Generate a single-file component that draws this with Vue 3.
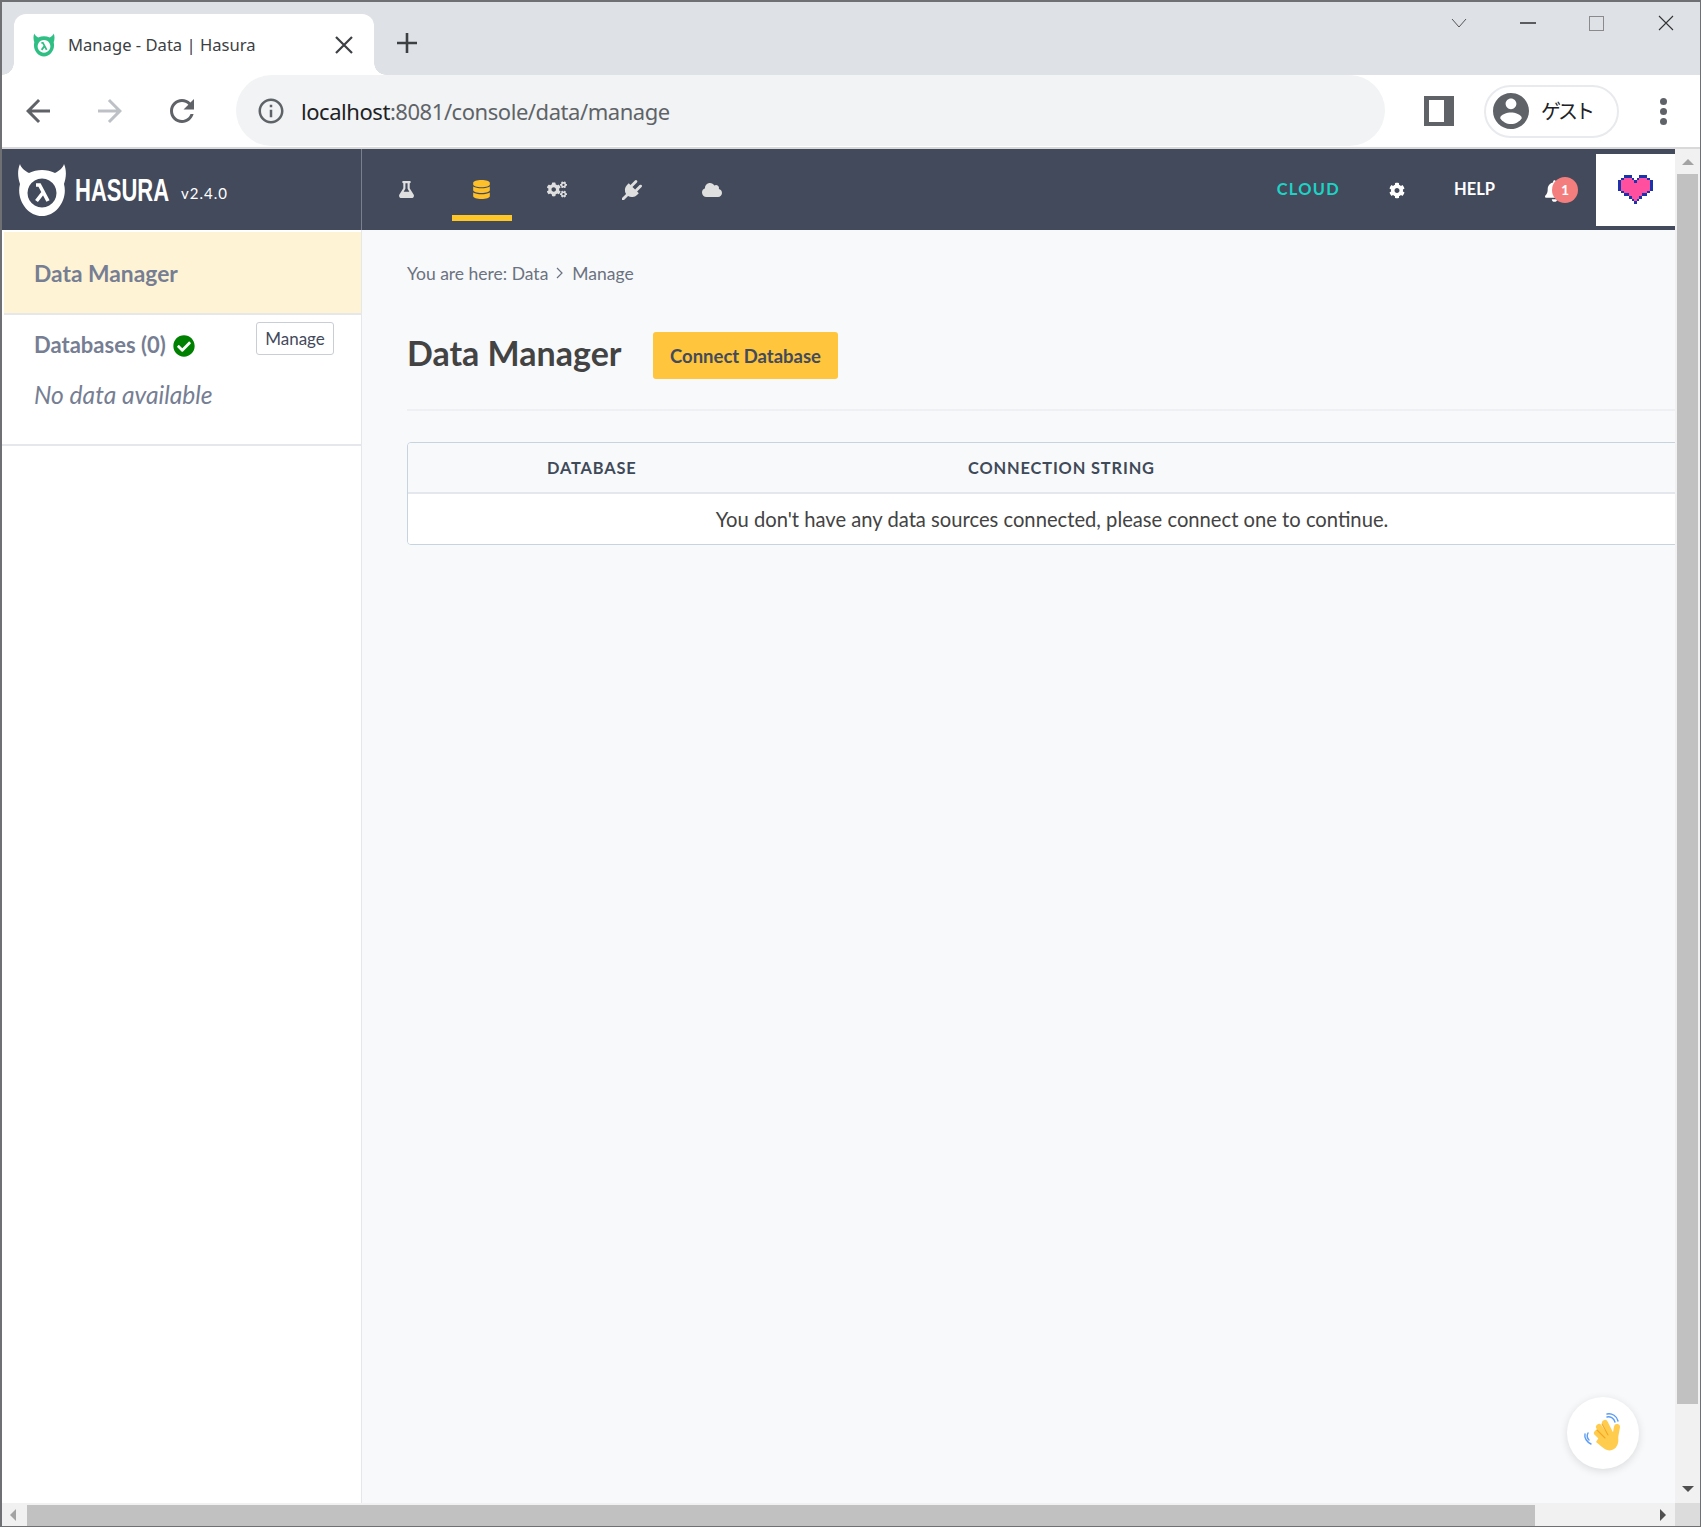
<script setup>
const logoD = 'M3 1C4 5 8 8 12 10C20 6 30 6 38 10C42 8 46 5 47 1C50 8 49 15 47 21C51 36 40 53 25 53C10 53 -1 36 3 21C1 15 0 8 3 1ZM25 15.5a14.5 14.5 0 1 0 .01 0Z'
const lambdaD = 'M19 22h3.5L31 38M26.5 29L19.5 38'
const cogs = 'M512.1 191l-8.2 14.3c-3 5.3-9.4 7.5-15.1 5.4-11.8-4.4-22.6-10.7-32.1-18.6-4.6-3.8-5.8-10.5-2.8-15.7l8.2-14.3c-6.9-8-12.3-17.3-15.9-27.4h-16.5c-6 0-11.2-4.3-12.2-10.3-2-12-2.1-24.6 0-37.1 1-6 6.2-10.4 12.2-10.4h16.5c3.6-10.1 9-19.4 15.9-27.4l-8.2-14.3c-3-5.2-1.9-11.9 2.8-15.7 9.5-7.9 20.4-14.2 32.1-18.6 5.7-2.1 12.1.1 15.1 5.4l8.2 14.3c10.5-1.9 21.2-1.9 31.7 0L552 6.3c3-5.3 9.4-7.5 15.1-5.4 11.8 4.4 22.6 10.7 32.1 18.6 4.6 3.8 5.8 10.5 2.8 15.7l-8.2 14.3c6.9 8 12.3 17.3 15.9 27.4h16.5c6 0 11.2 4.3 12.2 10.3 2 12 2.1 24.6 0 37.1-1 6-6.2 10.4-12.2 10.4h-16.5c-3.6 10.1-9 19.4-15.9 27.4l8.2 14.3c3 5.2 1.9 11.9-2.8 15.7-9.5 7.9-20.4 14.2-32.1 18.6-5.7 2.1-12.1-.1-15.1-5.4l-8.2-14.3c-10.4 1.9-21.2 1.9-31.7 0zm-10.5-58.8c38.5 29.6 82.4-14.3 52.8-52.8-38.5-29.7-82.4 14.3-52.8 52.8zM386.3 286.1l33.7 16.8c10.1 5.8 14.5 18.1 10.5 29.1-8.9 24.2-26.4 46.4-42.6 65.8-7.4 8.9-20.2 11.1-30.3 5.3l-29.1-16.8c-16 13.7-34.6 24.6-54.9 31.7v33.6c0 11.6-8.3 21.6-19.7 23.6-24.6 4.2-50.4 4.4-75.9 0-11.5-2-20-11.9-20-23.6V418c-20.3-7.2-38.9-18-54.9-31.7L74 403c-10 5.8-22.9 3.6-30.3-5.3-16.2-19.4-33.3-41.6-42.2-65.7-4-10.9.4-23.2 10.5-29.1l33.3-16.8c-3.9-20.9-3.9-42.4 0-63.4L12 205.8c-10.1-5.8-14.6-18.1-10.5-29 8.9-24.2 26-46.4 42.2-65.8 7.4-8.9 20.2-11.1 30.3-5.3l29.1 16.8c16-13.7 34.6-24.6 54.9-31.7V57.1c0-11.5 8.2-21.5 19.6-23.5 24.6-4.2 50.5-4.4 76-.1 11.5 2 20 11.9 20 23.6v33.6c20.3 7.2 38.9 18 54.9 31.7l29.1-16.8c10-5.8 22.9-3.6 30.3 5.3 16.2 19.4 33.2 41.6 42.1 65.8 4 10.9.1 23.2-10 29.1l-33.7 16.8c3.9 21 3.9 42.5 0 63.5zm-117.6 21.1c59.2-77-28.7-164.9-105.7-105.7-59.2 77 28.7 164.9 105.7 105.7zm243.4 182.7l-8.2 14.3c-3 5.3-9.4 7.5-15.1 5.4-11.8-4.4-22.6-10.7-32.1-18.6-4.6-3.8-5.8-10.5-2.8-15.7l8.2-14.3c-6.9-8-12.3-17.3-15.9-27.4h-16.5c-6 0-11.2-4.3-12.2-10.3-2-12-2.1-24.6 0-37.1 1-6 6.2-10.4 12.2-10.4h16.5c3.6-10.1 9-19.4 15.9-27.4l-8.2-14.3c-3-5.2-1.9-11.9 2.8-15.7 9.5-7.9 20.4-14.2 32.1-18.6 5.7-2.1 12.1.1 15.1 5.4l8.2 14.3c10.5-1.9 21.2-1.9 31.7 0l8.2-14.3c3-5.3 9.4-7.5 15.1-5.4 11.8 4.4 22.6 10.7 32.1 18.6 4.6 3.8 5.8 10.5 2.8 15.7l-8.2 14.3c6.9 8 12.3 17.3 15.9 27.4h16.5c6 0 11.2 4.3 12.2 10.3 2 12 2.1 24.6 0 37.1-1 6-6.2 10.4-12.2 10.4h-16.5c-3.6 10.1-9 19.4-15.9 27.4l8.2 14.3c3 5.2 1.9 11.9-2.8 15.7-9.5 7.9-20.4 14.2-32.1 18.6-5.7 2.1-12.1-.1-15.1-5.4l-8.2-14.3c-10.4 1.9-21.2 1.9-31.7 0zM501.6 431c38.5 29.6 82.4-14.3 52.8-52.8-38.5-29.6-82.4 14.3-52.8 52.8z'
const cog = 'M487.4 315.7l-42.6-24.6c4.3-23.2 4.3-47 0-70.2l42.6-24.6c4.9-2.8 7.1-8.6 5.5-14-11.1-35.6-30-67.8-54.7-94.6-3.8-4.1-10-5.1-14.8-2.3L380.8 110c-17.9-15.4-38.5-27.3-60.8-35.1V25.8c0-5.6-3.9-10.5-9.4-11.7-36.7-8.2-74.3-7.8-109.2 0-5.5 1.2-9.4 6.1-9.4 11.7V75c-22.2 7.9-42.8 19.8-60.8 35.1L88.7 85.5c-4.9-2.8-11-1.9-14.8 2.3-24.7 26.7-43.6 58.9-54.7 94.6-1.7 5.4.6 11.2 5.5 14L67.3 221c-4.3 23.2-4.3 47 0 70.2l-42.6 24.6c-4.9 2.8-7.1 8.6-5.5 14 11.1 35.6 30 67.8 54.7 94.6 3.8 4.1 10 5.1 14.8 2.3l42.6-24.6c17.9 15.4 38.5 27.3 60.8 35.1v49.2c0 5.6 3.9 10.5 9.4 11.7 36.7 8.2 74.3 7.8 109.2 0 5.5-1.2 9.4-6.1 9.4-11.7v-49.2c22.2-7.9 42.8-19.8 60.8-35.1l42.6 24.6c4.9 2.8 11 1.9 14.8-2.3 24.7-26.7 43.6-58.9 54.7-94.6 1.5-5.5-.7-11.3-5.6-14.1zM256 336c-44.1 0-80-35.9-80-80s35.9-80 80-80 80 35.9 80 80-35.9 80-80 80z'
const navItems = [
  { key: 'flask', box: '0 0 448 512', w: 15, h: 17, first: true, d: 'M437.2 403.5L320 215V64h8c13.3 0 24-10.7 24-24V24c0-13.3-10.7-24-24-24H120c-13.3 0-24 10.7-24 24v16c0 13.3 10.7 24 24 24h8v151L10.8 403.5C-18.5 450.6 15.3 512 70.9 512h306.2c55.7 0 89.4-61.5 60.1-108.5zM137.9 320l48.2-77.6c3.7-5.2 5.8-11.6 5.8-18.4V64h64v160c0 6.9 2.2 13.2 5.8 18.4l48.2 77.6h-172z' },
  { key: 'data', box: '0 0 448 512', w: 17, h: 19, active: true, d: 'M448 73.143v45.714C448 159.143 347.667 192 224 192S0 159.143 0 118.857V73.143C0 32.857 100.333 0 224 0s224 32.857 224 73.143zM448 176v102.857C448 319.143 347.667 352 224 352S0 319.143 0 278.857V176c48.125 33.143 136.208 48.572 224 48.572S399.874 209.143 448 176zm0 160v102.857C448 479.143 347.667 512 224 512S0 479.143 0 438.857V336c48.125 33.143 136.208 48.572 224 48.572S399.874 369.143 448 336z' },
  { key: 'actions', box: '0 0 640 512', w: 20, h: 17, d: cogs },
  { key: 'remote', box: '0 0 1792 1792', w: 20, h: 20, d: 'M1755 453q37 38 37 90.5t-37 90.5l-401 400 150 150-160 160q-163 163-389.5 186.5t-411.5-100.5l-362 362h-181v-181l362-362q-124-185-100.5-411.5t186.5-389.5l160-160 150 150 400-401q38-37 91-37t90 37 37 90.5-37 90.5l-400 401 234 234 401-400q38-37 91-37t90 37z' },
  { key: 'cloud', box: '0 0 640 512', w: 20, h: 16, last: true, d: 'M537.6 226.6c4.1-10.7 6.4-22.4 6.4-34.6 0-53-43-96-96-96-19.7 0-38.1 6-53.3 16.2C367 64.2 315.3 32 256 32c-88.4 0-160 71.6-160 160 0 2.7.1 5.4.2 8.1C40.2 219.8 0 273.2 0 336c0 79.5 64.5 144 144 144h368c70.7 0 128-57.3 128-128 0-61.9-44-113.6-102.4-125.4z' }
]
</script>

<template>
  <div class="window">
    <div class="tabstrip">
      <div class="tab">
        <svg class="favicon" viewBox="0 0 50 54" fill="#2fbf85"><path fill-rule="evenodd" :d="logoD" /><path :d="lambdaD" fill="none" stroke="#2fbf85" stroke-width="4" /></svg>
        <span class="tab-title">Manage - Data | Hasura</span>
        <svg class="tab-close" viewBox="0 0 18 18"><path d="M1 1L17 17M17 1L1 17" stroke="#3c4043" stroke-width="2.2" fill="none" /></svg>
      </div>
      <svg class="new-tab" viewBox="0 0 20 20"><path d="M10 0V20M0 10H20" stroke="#3c4043" stroke-width="2.6" fill="none" /></svg>
      <div class="win-controls">
        <div class="win-btn"><svg width="16" height="10" viewBox="0 0 16 10"><path d="M1 1L8 9L15 1" stroke="#555" fill="none" /></svg></div>
        <div class="win-btn"><svg width="16" height="2" viewBox="0 0 16 2"><path d="M0 1H16" stroke="#222" stroke-width="1.4" /></svg></div>
        <div class="win-btn"><svg width="16" height="15" viewBox="0 0 16 15"><rect x=".5" y=".5" width="14" height="14" stroke="#8a8a8a" fill="none" /></svg></div>
        <div class="win-btn"><svg width="16" height="16" viewBox="0 0 16 16"><path d="M1 1L15 15M15 1L1 15" stroke="#333" stroke-width="1.1" fill="none" /></svg></div>
      </div>
    </div>

    <div class="toolbar">
      <svg class="tb-icon first" viewBox="0 0 24 24" fill="#5f6368"><path d="M20 11H7.83l5.59-5.59L12 4l-8 8 8 8 1.41-1.41L7.83 13H20v-2z" /></svg>
      <svg class="tb-icon" viewBox="0 0 24 24" fill="#bdc1c6"><path d="M4 11h12.17l-5.59-5.59L12 4l8 8-8 8-1.41-1.41L16.17 13H4v-2z" /></svg>
      <svg class="tb-icon" viewBox="0 0 24 24" fill="#5f6368"><path d="M17.65 6.35C16.2 4.9 14.21 4 12 4c-4.42 0-7.99 3.58-7.99 8s3.57 8 7.99 8c3.73 0 6.84-2.55 7.73-6h-2.08c-.82 2.33-3.04 4-5.65 4-3.31 0-6-2.69-6-6s2.69-6 6-6c1.66 0 3.14.69 4.22 1.78L13 11h7V4l-2.35 2.35z" /></svg>
      <div class="omnibox">
        <svg class="info" viewBox="0 0 24 24" fill="#5f6368"><path d="M11 7h2v2h-2zm0 4h2v6h-2zm1-9C6.48 2 2 6.48 2 12s4.48 10 10 10 10-4.48 10-10S17.52 2 12 2zm0 18c-4.41 0-8-3.59-8-8s3.59-8 8-8 8 3.59 8 8-3.59 8-8 8z" /></svg>
        <span class="url"><span class="host">localhost</span>:8081/console/data/manage</span>
      </div>
      <div class="side-panel"></div>
      <div class="profile">
        <svg class="avatar" viewBox="2 2 20 20" fill="#5f6368"><path d="M12 2C6.48 2 2 6.48 2 12s4.48 10 10 10 10-4.48 10-10S17.52 2 12 2zm0 3c1.66 0 3 1.34 3 3s-1.34 3-3 3-3-1.34-3-3 1.34-3 3-3zm0 14.2c-2.5 0-4.71-1.28-6-3.22.03-1.99 4-3.08 6-3.08 1.99 0 5.97 1.09 6 3.08-1.29 1.94-3.5 3.22-6 3.22z" /></svg>
        <span class="guest">ゲスト</span>
      </div>
      <div class="kebab"><i></i><i></i><i></i></div>
    </div>

    <div class="viewport">
      <div class="app">
        <header class="app-header">
          <div class="brand">
            <svg class="logo" viewBox="0 0 50 54" fill="#fff"><path fill-rule="evenodd" :d="logoD" /><path :d="lambdaD" fill="none" stroke="#fff" stroke-width="3.6" /></svg>
            <span class="wordmark">HASURA</span>
            <span class="version">v2.4.0</span>
          </div>
          <nav class="nav">
            <div v-for="item in navItems" :key="item.key" class="nav-item" :class="{ active: item.active, last: item.last, first: item.first }">
              <svg :width="item.w" :height="item.h" :viewBox="item.box" fill="currentColor"><path :d="item.d" /></svg>
            </div>
          </nav>
          <div class="header-right">
            <span class="cloud">CLOUD</span>
            <svg class="gear" viewBox="0 0 512 512" fill="#fff"><path :d="cog" /></svg>
            <span class="help">HELP</span>
            <div class="bell">
              <svg width="19" height="22" viewBox="0 0 448 512" fill="#fff"><path d="M224 512c35.32 0 63.97-28.65 63.97-64H160.03c0 35.35 28.65 64 63.97 64zm215.39-149.71c-19.32-20.76-55.47-51.99-55.47-154.29 0-77.7-54.48-139.9-127.94-155.16V32c0-17.67-14.32-32-31.98-32s-31.98 14.33-31.98 32v20.84C118.56 68.1 64.08 130.3 64.08 208c0 102.3-36.15 133.53-55.47 154.29-6 6.45-8.66 14.16-8.61 21.71.11 16.4 12.98 32 32.1 32h383.8c19.12 0 32-15.6 32.1-32 .05-7.55-2.61-15.27-8.61-21.71z" /></svg>
              <span class="badge">1</span>
            </div>
            <div class="love">
              <svg width="35" height="29" viewBox="0 0 13 11" shape-rendering="crispEdges">
                <path fill="#1b34ad" d="M2 0H5V1H6V2H7V1H8V0H11V1H12V2H13V6H12V7H11V8H9V9H8V10H7V11H6V10H5V9H4V8H2V7H1V6H0V2H1V1H2Z" />
                <path fill="#ff4f9e" d="M2 1H5V2H6V3H7V2H8V1H11V2H12V6H11V7H9V8H8V9H7V10H6V9H5V8H4V7H2V6H1V2H2Z" />
              </svg>
            </div>
          </div>
        </header>

        <div class="body">
          <aside class="sidebar">
            <div class="side-title">Data Manager</div>
            <div class="side-section">
              <div class="db-row">
                <span class="db-label">Databases (0)</span>
                <svg class="check" viewBox="0 0 512 512" fill="#008000"><path d="M504 256c0 136.967-111.033 248-248 248S8 392.967 8 256 119.033 8 256 8s248 111.033 248 248zM227.314 387.314l184-184c6.248-6.248 6.248-16.379 0-22.627l-22.627-22.627c-6.248-6.249-16.379-6.249-22.628 0L216 308.118l-70.059-70.059c-6.248-6.248-16.379-6.248-22.628 0l-22.627 22.627c-6.248 6.248-6.248 16.379 0 22.627l104 104c6.249 6.25 16.379 6.25 22.628.001z" /></svg>
                <button class="manage-btn">Manage</button>
              </div>
              <div class="no-data">No data available</div>
            </div>
          </aside>

          <main class="main">
            <div class="breadcrumb">
              <span>You are here: Data</span>
              <svg class="crumb-sep" width="7" height="12" viewBox="0 0 7 12"><path d="M1 1L6 6L1 11" stroke="#6b7280" stroke-width="1.2" fill="none" /></svg>
              <span>Manage</span>
            </div>
            <div class="title-row">
              <h1 class="title">Data Manager</h1>
              <button class="connect">Connect Database</button>
            </div>
            <div class="divider"></div>
            <div class="table">
              <div class="thead">
                <span class="th">DATABASE</span>
                <span class="th">CONNECTION STRING</span>
              </div>
              <div class="tbody">You don't have any data sources connected, please connect one to continue.</div>
            </div>
            <div class="wave">
              <svg width="44" height="44" viewBox="0 0 44 44">
                <g fill="none" stroke="#5b9cf5" stroke-width="1.4" stroke-linecap="round">
                  <path d="M26 6C29 5 33 7 34 11" />
                  <path d="M26 3C31 2 36 5 37 10" />
                  <path d="M8 29C6 27 6 24 7 22" />
                  <path d="M10 33C6 31 3 27 4 23" />
                </g>
                <g fill="none" stroke="#ffcc4d" stroke-width="6" stroke-linecap="round">
                  <path d="M18 16L25 26" />
                  <path d="M24 12L30 24" />
                  <path d="M16 22L24 30" />
                  <path d="M36 16L34 27" />
                </g>
                <path fill="#ffcc4d" d="M22 20L36 22C39 30 37 37 31 39C26 41 21 36 15 31Z" />
                <g fill="none" stroke="#f5a623" stroke-width="1.1" stroke-linecap="round">
                  <path d="M16 19L24 27" />
                  <path d="M21 13L27 24" />
                </g>
              </svg>
            </div>
          </main>
        </div>

        <div class="h-scroll">
          <div class="arrow-box"><span class="tri left"></span></div>
          <div class="h-thumb"></div>
          <div class="h-rest"><span class="tri right"></span></div>
        </div>
      </div>

      <div class="v-col">
        <div class="v-scroll">
          <div class="v-up"><span class="tri up"></span></div>
          <div class="v-thumb"></div>
          <div class="v-rest"><span class="tri down"></span></div>
        </div>
        <div class="corner"></div>
      </div>
    </div>
  </div>
</template>

<style>
html, body { margin: 0; overflow: hidden; background: #fff; }
</style>

<style scoped>
.window {
  box-sizing: border-box;
  width: 1701px;
  height: 1527px;
  display: flex;
  flex-direction: column;
  border: solid #6f7073;
  border-width: 2px 1px 1px 2px;
  overflow: hidden;
  font-family: "Lato", "Noto Sans", sans-serif;
}
.tabstrip {
  height: 73px;
  flex: none;
  display: flex;
  background: #dee1e6;
  padding-left: 12px;
}
.tab {
  position: relative;
  width: 360px;
  height: 61px;
  margin-top: 12px;
  box-sizing: border-box;
  background: #fff;
  border-radius: 12px 12px 0 0;
  display: flex;
  align-items: center;
  padding: 0 21px 0 19px;
}
.tab::before, .tab::after {
  content: "";
  position: absolute;
  bottom: 0;
  width: 12px;
  height: 12px;
}
.tab::before { left: -12px; background: radial-gradient(circle at 0 0, #dee1e6 11.5px, #fff 12px); }
.tab::after { right: -12px; background: radial-gradient(circle at 100% 0, #dee1e6 11.5px, #fff 12px); }
.favicon { width: 22px; height: 24px; flex: none; }
.tab-title {
  margin-left: 13px;
  font: 16.6px "Noto Sans", sans-serif;
  color: #3c4043;
  white-space: nowrap;
}
.tab-close { width: 18px; height: 18px; margin-left: auto; flex: none; }
.new-tab { width: 20px; height: 20px; margin: 31px 0 0 23px; flex: none; }
.win-controls { margin-left: auto; display: flex; height: 42px; }
.win-btn { width: 68.8px; display: flex; align-items: center; justify-content: center; }

.toolbar {
  height: 72px;
  flex: none;
  box-sizing: content-box;
  background: #fff;
  border-bottom: 2px solid #d9d9d9;
  display: flex;
  align-items: center;
  padding-left: 18px;
}
.tb-icon { width: 36px; height: 36px; margin-right: 36px; flex: none; }
.omnibox {
  width: 1149px;
  height: 71px;
  align-self: flex-start;
  box-sizing: border-box;
  border-radius: 36px;
  background: #f1f3f4;
  display: flex;
  align-items: center;
  padding-left: 20px;
  flex: none;
}
.info { width: 30px; height: 30px; flex: none; }
.url {
  margin-left: 15px;
  margin-top: 1px;
  font: 22px "Noto Sans", sans-serif;
  letter-spacing: -0.45px;
  color: #5f6368;
  white-space: nowrap;
}
.host { color: #202124; }
.side-panel {
  width: 30px;
  height: 30px;
  box-sizing: border-box;
  margin-left: 39px;
  border: solid #5f6368;
  border-width: 4px 10px 4px 5px;
  flex: none;
}
.profile {
  width: 135px;
  height: 53px;
  box-sizing: border-box;
  margin-left: 30px;
  border: 2px solid #e8eaed;
  border-radius: 27px;
  display: flex;
  align-items: center;
  padding-left: 7px;
  flex: none;
}
.avatar { width: 36px; height: 36px; flex: none; }
.guest {
  margin-left: 12px;
  margin-top: -1px;
  font: 20px "Noto Sans CJK JP", sans-serif;
  letter-spacing: -3px;
  color: #202124;
}
.kebab { margin-left: 41px; display: flex; flex-direction: column; gap: 3px; }
.kebab i { display: block; width: 7px; height: 7px; border-radius: 50%; background: #5f6368; }

.viewport { flex: 1; min-height: 0; display: flex; }
.app { width: 1673px; flex: none; display: flex; flex-direction: column; min-height: 0; }
.app-header {
  height: 81px;
  flex: none;
  background: #434a5b;
  display: flex;
}
.brand {
  width: 360px;
  flex: none;
  box-sizing: border-box;
  border-right: 1px solid #7a808e;
  display: flex;
  align-items: center;
  padding-left: 15px;
  color: #fff;
}
.logo { width: 50px; height: 54px; flex: none; margin-top: 1px; }
.wordmark {
  margin-left: 8px;
  font: 700 31px "Liberation Sans", sans-serif;
  width: 92px;
  transform: scaleX(.71);
  transform-origin: 0 50%;
  white-space: nowrap;
  margin-top: 3px;
}
.version {
  margin-left: 14px;
  font-size: 15px;
  letter-spacing: 1px;
  margin-top: 7px;
}
.nav { display: flex; gap: 15px; padding-left: 15px; }
.nav-item {
  width: 60px;
  height: 72px;
  box-sizing: border-box;
  display: flex;
  align-items: center;
  justify-content: center;
  color: #dfdfdf;
  border-bottom: 6px solid transparent;
  margin-bottom: 9px;
  padding-top: 15px;
}
.nav-item.active { color: #fec02a; border-bottom-color: #ffc627; padding-right: 2px; }
.nav-item.first { padding-right: 2px; }
.nav-item.last { margin-left: 5px; }
.header-right { margin-left: auto; display: flex; align-items: center; color: #fff; }
.cloud {
  font-weight: 700;
  font-size: 16.4px;
  letter-spacing: 1.3px;
  color: #1cd3c6;
  margin-right: 49px;
  margin-top: -2px;
}
.gear { width: 16px; height: 17px; margin-right: 49px; margin-top: 1px; }
.help { font-weight: 700; font-size: 16.5px; margin-right: 50px; margin-top: -2px; }
.bell { position: relative; width: 34px; height: 22px; margin-right: 17px; margin-top: 2px; }
.badge {
  position: absolute;
  left: 7px;
  top: -3px;
  width: 26px;
  height: 26px;
  border-radius: 50%;
  background: #f47e7e;
  color: #fff;
  font-size: 14px;
  font-weight: 700;
  display: flex;
  align-items: center;
  justify-content: center;
}
.love {
  width: 79px;
  height: 72px;
  box-sizing: border-box;
  align-self: flex-start;
  margin-top: 5px;
  padding-bottom: 2px;
  background: #fff;
  display: flex;
  align-items: center;
  justify-content: center;
}

.body { flex: 1; min-height: 0; display: flex; background: #f8f9fb; }
.sidebar {
  width: 360px;
  flex: none;
  box-sizing: border-box;
  background: #fff;
  border-right: 1px solid #e5e7eb;
  padding: 2px 0 0 2px;
}
.side-title {
  height: 81px;
  box-sizing: content-box;
  background: #fff3d5;
  border-bottom: 2px solid #e5e7eb;
  display: flex;
  align-items: center;
  padding: 0 0 0 30px;
  font-size: 22.8px;
  font-weight: 700;
  color: #767e93;
  line-height: 78px;
}
.side-section {
  height: 131px;
  box-sizing: border-box;
  border-bottom: 2px solid #e5e7eb;
  padding: 7px 27px 0 32px;
  margin-left: -2px;
}
.db-row { display: flex; align-items: flex-start; }
.db-label { font-size: 22px; font-weight: 700; color: #767e93; margin-top: 9px; }
.check { width: 22px; height: 22px; margin: 13px 0 0 7px; }
.manage-btn {
  margin-left: auto;
  width: 78px;
  height: 33px;
  padding: 0;
  background: #fff;
  border: 1px solid #c9ced6;
  border-radius: 3px;
  font: 17px "Lato", sans-serif;
  color: #434a5b;
}
.no-data {
  margin-top: 22px;
  font-size: 24.6px;
  font-style: italic;
  color: #767e93;
}
.main {
  position: relative;
  flex: 1;
  min-width: 0;
  overflow: hidden;
  padding: 31px 0 0 45px;
}
.breadcrumb {
  height: 24px;
  display: flex;
  align-items: center;
  font-size: 17.5px;
  color: #6b7280;
  white-space: nowrap;
}
.crumb-sep { margin: 0 9px 0 8px; }
.title-row { display: flex; align-items: center; margin-top: 47px; height: 47px; }
.title {
  margin: -6px 0 0;
  font-size: 34px;
  font-weight: 700;
  color: #434343;
  width: 246px;
  white-space: nowrap;
}
.connect {
  width: 185px;
  height: 47px;
  padding: 0;
  border: none;
  border-radius: 3px;
  background: #fec53d;
  font: 700 18.5px "Lato", sans-serif;
  color: #434a5b;
  white-space: nowrap;
}
.divider { height: 2px; background: #eef0f3; margin-top: 30px; }
.table {
  width: 1290px;
  box-sizing: border-box;
  margin-top: 31px;
  border: 1px solid #c8d3e0;
  border-radius: 4px;
  overflow: hidden;
}
.thead {
  height: 49px;
  border-bottom: 2px solid #e4e8ee;
  display: grid;
  grid-template-columns: 421px 1fr;
  align-items: center;
  padding-left: 139px;
  background: #f8f9fb;
}
.th { font-size: 16.4px; font-weight: 700; letter-spacing: .85px; color: #3f4a59; white-space: nowrap; }
.tbody {
  height: 50px;
  background: #fff;
  display: flex;
  align-items: center;
  justify-content: center;
  font-size: 20.2px;
  color: #434343;
  white-space: nowrap;
}
.wave {
  position: absolute;
  right: 36px;
  bottom: 34px;
  width: 72px;
  height: 72px;
  border-radius: 50%;
  background: #fff;
  box-shadow: 0 2px 8px rgba(0, 0, 0, .12);
  display: flex;
  align-items: center;
  justify-content: center;
}
.h-scroll {
  height: 23px;
  flex: none;
  display: flex;
  background: #f1f1f1;
}
.arrow-box { width: 25px; flex: none; display: flex; align-items: center; padding-left: 8px; box-sizing: border-box; }
.h-thumb { width: 1508px; flex: none; background: #c1c1c1; margin-top: 2px; }
.h-rest { flex: 1; display: flex; align-items: center; justify-content: flex-end; padding-right: 9px; }
.v-col { flex: 1; display: flex; flex-direction: column; min-height: 0; }
.v-scroll { flex: 1; min-height: 0; display: flex; flex-direction: column; background: #f1f1f1; align-items: center; }
.v-up { height: 25px; flex: none; display: flex; align-items: center; }
.v-thumb { width: 21px; height: 1230px; flex: none; background: #c1c1c1; }
.v-rest { flex: 1; display: flex; align-items: flex-end; padding-bottom: 11px; }
.corner { height: 23px; flex: none; background: #dcdcdc; }
.tri { display: block; width: 0; height: 0; border-style: solid; }
.tri.up { border-width: 0 6px 6px; border-color: transparent transparent #a3a3a3; }
.tri.down { border-width: 6px 6px 0; border-color: #505050 transparent transparent; }
.tri.left { border-width: 6px 6px 6px 0; border-color: transparent #a3a3a3 transparent transparent; }
.tri.right { border-width: 6px 0 6px 6px; border-color: transparent transparent transparent #505050; }
</style>
